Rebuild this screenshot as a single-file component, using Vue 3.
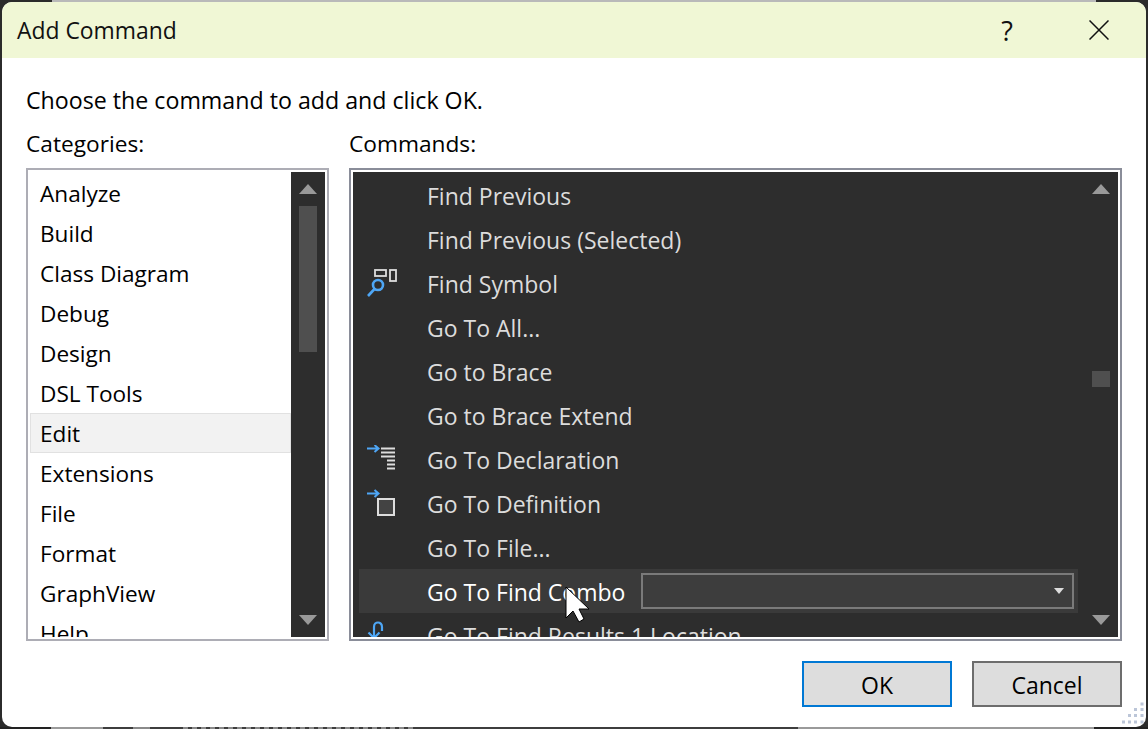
<script setup>
const categories = ['Analyze', 'Build', 'Class Diagram', 'Debug', 'Design', 'DSL Tools', 'Edit', 'Extensions', 'File', 'Format', 'GraphView', 'Help']
const commands = [
  { label: 'Find Previous' },
  { label: 'Find Previous (Selected)' },
  { label: 'Find Symbol', icon: 'symbol' },
  { label: 'Go To All...' },
  { label: 'Go to Brace' },
  { label: 'Go to Brace Extend' },
  { label: 'Go To Declaration', icon: 'declaration' },
  { label: 'Go To Definition', icon: 'definition' },
  { label: 'Go To File...' },
  { label: 'Go To Find Combo', combo: true },
  { label: 'Go To Find Results 1 Location', icon: 'result' }
]
</script>

<template>
  <div class="desktop">
    <div class="dialog">
      <header class="titlebar">
        <span class="title">Add Command</span>
        <span class="help">?</span>
        <svg class="close" width="20" height="20" viewBox="0 0 20 20"><path d="M0.5 0.5L19.5 19.5M19.5 0.5L0.5 19.5" stroke="#111" stroke-width="1.5" fill="none"/></svg>
      </header>
      <div class="body">
        <p class="intro">Choose the command to add and click OK.</p>
        <div class="columns">
          <section class="col-left">
            <div class="label">Categories:</div>
            <div class="listbox light">
              <div class="list">
                <div v-for="c in categories" :key="c" class="cat" :class="{ selected: c === 'Edit' }">{{ c }}</div>
              </div>
              <div class="scrollbar">
                <i class="up"></i>
                <i class="thumb left-thumb"></i>
                <i class="grow"></i>
                <i class="down"></i>
              </div>
            </div>
          </section>
          <section class="col-right">
            <div class="label">Commands:</div>
            <div class="listbox dark">
              <div class="list cmds">
                <div v-for="c in commands" :key="c.label" class="cmd" :class="{ hover: c.combo }">
                  <span class="cmd-icon">
                    <svg v-if="c.icon === 'symbol'" width="32" height="32" viewBox="0 0 32 32">
                      <rect x="9" y="1" width="11" height="6" fill="none" stroke="#ddd" stroke-width="1.8"/>
                      <rect x="24" y="1" width="6" height="11" fill="none" stroke="#ddd" stroke-width="1.8"/>
                      <circle cx="12" cy="16" r="5" fill="none" stroke="#4ea6f5" stroke-width="2.6"/>
                      <path d="M8.5 20L2 27" stroke="#4ea6f5" stroke-width="2.6" fill="none"/>
                    </svg>
                    <svg v-else-if="c.icon === 'declaration'" width="32" height="32" viewBox="0 0 32 32">
                      <path d="M1 3.5H12M8.5 0L12.5 3.5L8.5 7" stroke="#4ea6f5" stroke-width="2" fill="none"/>
                      <path d="M15 3.5H29M15 7.5H29M15 11.5H29M21 15.5H29M21 19.5H29M21 23.5H29" stroke="#ddd" stroke-width="2" fill="none"/>
                    </svg>
                    <svg v-else-if="c.icon === 'definition'" width="32" height="32" viewBox="0 0 32 32">
                      <path d="M1 4.5H12M8.5 1L12.5 4.5L8.5 8" stroke="#4ea6f5" stroke-width="2" fill="none"/>
                      <rect x="12" y="10" width="16" height="16" fill="#434343" stroke="#ddd" stroke-width="2"/>
                    </svg>
                    <svg v-else-if="c.icon === 'result'" width="32" height="32" viewBox="0 0 32 32">
                      <path d="M16 10V6C16 3 14 1.5 12 1.5C10 1.5 8 3 8 6V17M2.5 11.5L8 17L13.5 11.5" stroke="#4ea6f5" stroke-width="2.2" fill="none"/>
                    </svg>
                  </span>
                  <span class="cmd-label">{{ c.label }}</span>
                  <span v-if="c.combo" class="combo"><svg width="10" height="6" viewBox="0 0 10 6"><path d="M0 0H10L5 6Z" fill="#ddd"/></svg></span>
                </div>
              </div>
              <div class="scrollbar">
                <i class="up"></i>
                <i class="thumb right-thumb"></i>
                <i class="grow"></i>
                <i class="down"></i>
              </div>
              <svg class="cursor" width="28" height="40" viewBox="0 0 28 40">
                <path d="M1 1V32L8 25L14 36L19 33L14 23H24Z" fill="#fff" stroke="#000" stroke-width="1"/>
              </svg>
            </div>
          </section>
        </div>
        <footer class="actions">
          <button class="btn primary">OK</button>
          <button class="btn">Cancel</button>
        </footer>
      </div>
      <svg class="grip" width="28" height="28" viewBox="0 0 28 28" fill="#bcc6d8">
        <rect x="22.5" y="3.5" width="3" height="3"/>
        <rect x="16" y="9" width="3" height="3"/><rect x="22.5" y="9" width="3" height="3"/>
        <rect x="10" y="15" width="3" height="3"/><rect x="16" y="15" width="3" height="3"/><rect x="22.5" y="15" width="3" height="3"/>
        <rect x="4" y="21.5" width="3" height="3"/><rect x="10" y="21.5" width="3" height="3"/><rect x="16" y="21.5" width="3" height="3"/><rect x="22.5" y="21.5" width="3" height="3"/>
      </svg>
    </div>
  </div>
</template>

<style>
html, body { margin: 0; background: #2b2b2b; }
</style>

<style scoped>
.desktop {
  width: 1148px;
  height: 729px;
  padding: 2px;
  box-sizing: border-box;
  overflow: hidden;
  font-family: "Open Sans", "Noto Sans", sans-serif;
  background:
    linear-gradient(90deg, #2b2b2b 52px, #b9b9b9 52px, #b9b9b9 1096px, #2b2b2b 1096px) top / 100% 2px no-repeat,
    repeating-linear-gradient(90deg, #8a8a8a 0, #8a8a8a 5px, #3e3e3e 5px, #3e3e3e 9px) 183px bottom / 234px 2px no-repeat,
    linear-gradient(90deg, #222 51px, #9a9a9a 51px, #9a9a9a 103px, #3e3e3e 103px, #3e3e3e 133px, #8a8a8a 133px, #8a8a8a 150px, #3e3e3e 150px, #3e3e3e 798px, #9a9a9a 798px, #9a9a9a 1094px, #222 1094px) bottom / 100% 2px no-repeat,
    #2b2b2b;
}
.dialog {
  position: relative;
  height: 725px;
  background: #fff;
  border-radius: 10px;
  overflow: hidden;
  color: #000;
}
.titlebar {
  height: 56px;
  background: #f0f7d5;
  display: flex;
  align-items: center;
  padding: 0 37px 0 15px;
  box-sizing: border-box;
}
.title { font-size: 22.9px; flex: 1; color: #111; }
.help { font-size: 27px; margin-right: 76px; color: #111; line-height: 1; }
.close { display: block; }
.body { padding: 0 24px; }
.intro { margin: 0; height: 43px; padding-top: 27px; font-size: 23.2px; line-height: 30px; box-sizing: content-box; }
.columns { display: flex; gap: 20px; margin-top: 0; }
.col-left { width: 303px; }
.col-right { width: 773px; }
.label { font-size: 22.7px; line-height: 30px; height: 39px; padding-top: 1px; }
.listbox {
  position: relative;
  height: 473px;
  box-sizing: border-box;
  border: 2px solid #adadb5;
  padding: 2px;
  display: flex;
  background: #fff;
  overflow: hidden;
}
.listbox.dark { border-color: #8a8d99; }
.list { flex: 1; overflow: hidden; min-width: 0; }
.light .list { padding-top: 2px; }
.cat {
  height: 40px;
  line-height: 40px;
  font-size: 22.6px;
  padding-left: 10px;
  box-sizing: border-box;
  white-space: nowrap;
}
.cat.selected {
  background: #f2f2f2;
  border: 1px solid #e1e1e1;
  margin: -1px 0 1px;
  line-height: 40px;
  padding-left: 9px;
}
.dark .list { background: #2d2d2d; }
.cmds { padding: 1px 0 0 6px; }
.cmd {
  height: 44px;
  width: 719px;
  display: flex;
  align-items: center;
  color: #dcdcdc;
  font-size: 23px;
  box-sizing: border-box;
  padding-top: 1px;
  white-space: nowrap;
}
.cmd.hover { background: #3a3a3a; color: #fff; }
.cmd-icon { width: 68px; height: 32px; margin-top: 2px; flex: none; display: block; padding-left: 7px; box-sizing: border-box; }
.cmd-icon svg { display: block; }
.cmd-label { flex: none; }
.combo { display: flex; }
.cmd.hover .combo {
  margin: -1px 4px 0 auto;
  width: 433px;
  height: 36px;
  box-sizing: border-box;
  border: 2px solid #7a7a7a;
  background: #3d3d3d;
  align-items: center;
  justify-content: flex-end;
  padding-right: 8px;
}
.combo svg { display: block; }
.scrollbar {
  width: 34px;
  flex: none;
  background: #2d2d2d;
  display: flex;
  flex-direction: column;
  align-items: center;
  padding: 12px 0;
  box-sizing: border-box;
}
.scrollbar i { display: block; flex: none; }
.up { width: 0; height: 0; border: 9px solid transparent; border-top: 0; border-bottom: 10px solid #999; }
.down { width: 0; height: 0; border: 9px solid transparent; border-bottom: 0; border-top: 10px solid #999; }
.thumb { width: 18px; background: #4f4f4f; }
.left-thumb { height: 146px; margin-top: 12px; }
.right-thumb { height: 16px; margin-top: 177px; }
.scrollbar .grow { flex: 1; }
.cursor { position: absolute; left: 214px; top: 416px; }
.actions { display: flex; justify-content: flex-end; gap: 20px; margin-top: 20px; }
.btn {
  width: 150px;
  height: 46px;
  background: #ddd;
  border: 2px solid #6d6d6d;
  font: inherit;
  font-size: 23px;
  color: #000;
  padding: 2px 0 0;
}
.btn.primary { border-color: #0078d4; }
.grip { position: absolute; right: 0; bottom: 0; }
</style>
